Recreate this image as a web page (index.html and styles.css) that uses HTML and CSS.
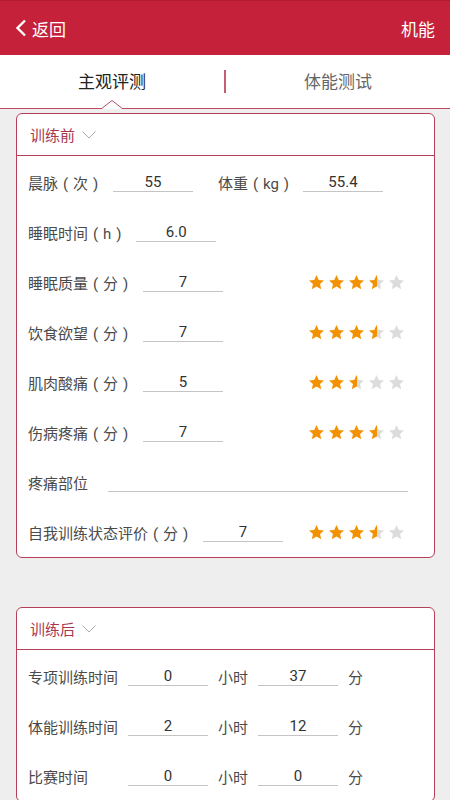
FILE: index.html
```html
<!DOCTYPE html>
<html lang="zh-CN">
<head>
<meta charset="utf-8">
<title>机能</title>
<link rel="stylesheet" href="styles.css">
</head>
<body>
<svg class="defs" width="0" height="0" aria-hidden="true">
  <defs>
    <linearGradient id="half" x1="0" y1="0" x2="1" y2="0">
      <stop offset="50%" stop-color="#f39200"/>
      <stop offset="50%" stop-color="#dcdcdc"/>
    </linearGradient>
    <symbol id="star" viewBox="0 0 24 24">
      <polygon points="12,1.5 15.2,8.3 22.6,9.1 17,14.1 18.6,21.5 12,17.7 5.4,21.5 7,14.1 1.4,9.1 8.8,8.3"/>
    </symbol>
  </defs>
</svg>

<header class="topbar">
  <div class="back">
    <svg class="back-icon" viewBox="0 0 12 18" width="12" height="18"><polyline points="10,1.5 2.5,9 10,16.5" fill="none" stroke="#fff" stroke-width="2.4" stroke-linejoin="miter"/></svg>
    <span>返回</span>
  </div>
  <div class="title">机能</div>
</header>

<nav class="tabs">
  <div class="tab active">主观评测
    <svg class="notch" viewBox="0 0 22 10" width="22" height="10"><polyline points="0,10 11,1.5 22,10" fill="#fff" stroke="#bd4a5e" stroke-width="1"/></svg>
  </div>
  <div class="tab-divider"></div>
  <div class="tab">体能测试</div>
</nav>

<main class="content">
  <section class="card">
    <div class="card-head">
      <span>训练前</span>
      <svg class="caret" viewBox="0 0 14 8" width="14" height="8"><polyline points="0.5,0.5 7,7 13.5,0.5" fill="none" stroke="#aaa" stroke-width="1"/></svg>
    </div>
    <div class="card-body">
      <div class="row">
        <span class="label">晨脉<span class="p">(</span>次<span class="p">)</span></span>
        <span class="field">55</span>
        <span class="label label-gap">体重<span class="p">(</span>kg<span class="p">)</span></span>
        <span class="field field-tight">55.4</span>
      </div>
      <div class="row">
        <span class="label">睡眠时间<span class="p">(</span>h<span class="p">)</span></span>
        <span class="field">6.0</span>
      </div>
      <div class="row">
        <span class="label">睡眠质量<span class="p">(</span>分<span class="p">)</span></span>
        <span class="field">7</span>
        <span class="stars">
          <svg class="st on"><use href="#star"/></svg><svg class="st on"><use href="#star"/></svg><svg class="st on"><use href="#star"/></svg><svg class="st half"><use href="#star"/></svg><svg class="st off"><use href="#star"/></svg>
        </span>
      </div>
      <div class="row">
        <span class="label">饮食欲望<span class="p">(</span>分<span class="p">)</span></span>
        <span class="field">7</span>
        <span class="stars">
          <svg class="st on"><use href="#star"/></svg><svg class="st on"><use href="#star"/></svg><svg class="st on"><use href="#star"/></svg><svg class="st half"><use href="#star"/></svg><svg class="st off"><use href="#star"/></svg>
        </span>
      </div>
      <div class="row">
        <span class="label">肌肉酸痛<span class="p">(</span>分<span class="p">)</span></span>
        <span class="field">5</span>
        <span class="stars">
          <svg class="st on"><use href="#star"/></svg><svg class="st on"><use href="#star"/></svg><svg class="st half"><use href="#star"/></svg><svg class="st off"><use href="#star"/></svg><svg class="st off"><use href="#star"/></svg>
        </span>
      </div>
      <div class="row">
        <span class="label">伤病疼痛<span class="p">(</span>分<span class="p">)</span></span>
        <span class="field">7</span>
        <span class="stars">
          <svg class="st on"><use href="#star"/></svg><svg class="st on"><use href="#star"/></svg><svg class="st on"><use href="#star"/></svg><svg class="st half"><use href="#star"/></svg><svg class="st off"><use href="#star"/></svg>
        </span>
      </div>
      <div class="row">
        <span class="label">疼痛部位</span>
        <span class="field field-wide"></span>
      </div>
      <div class="row">
        <span class="label">自我训练状态评价<span class="p">(</span>分<span class="p">)</span></span>
        <span class="field">7</span>
        <span class="stars">
          <svg class="st on"><use href="#star"/></svg><svg class="st on"><use href="#star"/></svg><svg class="st on"><use href="#star"/></svg><svg class="st half"><use href="#star"/></svg><svg class="st off"><use href="#star"/></svg>
        </span>
      </div>
    </div>
  </section>

  <section class="card card-after">
    <div class="card-head">
      <span>训练后</span>
      <svg class="caret" viewBox="0 0 14 8" width="14" height="8"><polyline points="0.5,0.5 7,7 13.5,0.5" fill="none" stroke="#aaa" stroke-width="1"/></svg>
    </div>
    <div class="card-body">
      <div class="row">
        <span class="label fixed">专项训练时间</span>
        <span class="field">0</span>
        <span class="unit">小时</span>
        <span class="field">37</span>
        <span class="unit">分</span>
      </div>
      <div class="row">
        <span class="label fixed">体能训练时间</span>
        <span class="field">2</span>
        <span class="unit">小时</span>
        <span class="field">12</span>
        <span class="unit">分</span>
      </div>
      <div class="row">
        <span class="label fixed">比赛时间</span>
        <span class="field">0</span>
        <span class="unit">小时</span>
        <span class="field">0</span>
        <span class="unit">分</span>
      </div>
    </div>
  </section>
</main>
</body>
</html>
```

FILE: styles.css
```css
* { box-sizing: border-box; }

html, body {
  margin: 0;
  padding: 0;
}

body {
  width: 450px;
  height: 800px;
  overflow: hidden;
  background: #eeeeee;
  font-family: Roboto, "Noto Sans CJK SC", "Noto Sans", sans-serif;
  color: #444;
}

.defs {
  display: block;
  width: 0;
  height: 0;
  overflow: hidden;
}

.topbar {
  height: 55px;
  background: #c5213a;
  border-top: 1px solid #b01d33;
  color: #fff;
  display: flex;
  align-items: center;
  justify-content: space-between;
  padding: 0 15px 0 15px;
  font-size: 17px;
}

.back {
  display: flex;
  align-items: center;
  gap: 5px;
}

.back-icon { display: block; margin-top: -1px; }

.tabs {
  height: 54px;
  background: #fff;
  border-bottom: 1px solid #bd4a5e;
  display: flex;
  align-items: center;
}

.tab {
  flex: 1;
  text-align: center;
  font-size: 17px;
  color: #666;
  position: relative;
  height: 53px;
  line-height: 53px;
  padding-top: 1px;
}

.tab.active { color: #222; }

.notch {
  position: absolute;
  left: 50%;
  margin-left: -11px;
  bottom: -1px;
  display: block;
}

.tab-divider {
  width: 2px;
  height: 23px;
  background: #c06070;
}

.content {
  padding: 4px 15px 0 16px;
}

.card {
  background: #fff;
  border: 1px solid #b5405a;
  border-radius: 6px;
}

.card-after {
  margin-top: 49px;
}

.card-head {
  height: 42px;
  border-bottom: 1px solid #b5405a;
  display: flex;
  align-items: center;
  padding-left: 13px;
  font-size: 15px;
  color: #a8364f;
  gap: 7px;
}

.caret { display: block; margin-top: 1px; }

.card-body {
  padding-top: 1px;
}

.row {
  height: 50px;
  display: flex;
  align-items: center;
  padding-left: 11px;
  padding-right: 29px;
  font-size: 15px;
}

.label {
  color: #4a4a4a;
  white-space: nowrap;
}

.label .p {
  display: inline-block;
  width: 15px;
  text-align: center;
}

.label.fixed { width: 90px; }

.label-gap { margin-left: 25px; }

.field {
  width: 80px;
  height: 18px;
  line-height: 18px;
  margin-left: 10px;
  border-bottom: 1px solid #c4c4c4;
  text-align: center;
  color: #333;
  font-size: 15px;
  box-sizing: content-box;
}

.field-tight { margin-left: 9px; }

.field-wide {
  width: auto;
  flex: 1;
  margin-left: 20px;
  margin-right: -3px;
}

.unit {
  margin-left: 10px;
  width: 30px;
  color: #4a4a4a;
}

.stars {
  margin-left: auto;
  display: flex;
  gap: 3px;
}

.st {
  width: 17px;
  height: 17px;
  display: block;
}

.st.on { fill: #f39200; }
.st.off { fill: #dcdcdc; }
.st.half { fill: url(#half); }
```
